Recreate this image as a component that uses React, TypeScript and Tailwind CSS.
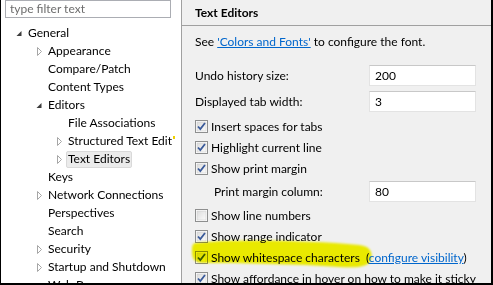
import React from "react";

type TreeNode = {label: string; level: number; arrow?: "open" | "closed"; selected?: boolean};

const tree: TreeNode[] = [
  {label: "General", level: 0, arrow: "open"},
  {label: "Appearance", level: 1, arrow: "closed"},
  {label: "Compare/Patch", level: 1},
  {label: "Content Types", level: 1},
  {label: "Editors", level: 1, arrow: "open"},
  {label: "File Associations", level: 2},
  {label: "Structured Text Edit", level: 2, arrow: "closed"},
  {label: "Text Editors", level: 2, arrow: "closed", selected: true},
  {label: "Keys", level: 1},
  {label: "Network Connections", level: 1, arrow: "closed"},
  {label: "Perspectives", level: 1},
  {label: "Search", level: 1},
  {label: "Security", level: 1, arrow: "closed"},
  {label: "Startup and Shutdown", level: 1, arrow: "closed"},
  {label: "Web Browser", level: 1},
];

const indent = ["pl-[14px]", "pl-[34px]", "pl-[54px]"];

function Arrow({kind}: {kind?: "open" | "closed"}) {
  if (kind === "open") {
    return (
      <svg width="13" height="18" viewBox="0 0 13 18" className="shrink-0">
        <path d="M6.5 7 L6.5 12 L1.5 12 Z" fill="#3c3c3c" />
      </svg>
    );
  }
  if (kind === "closed") {
    return (
      <svg width="13" height="18" viewBox="0 0 13 18" className="shrink-0">
        <path d="M2.5 5.5 L6.5 9.5 L2.5 13.5 Z" fill="none" stroke="#a6a6a6" strokeWidth="1" />
      </svg>
    );
  }
  return <span className="w-[13px] shrink-0" />;
}

function Check({checked}: {checked: boolean}) {
  return (
    <svg width="13" height="13" viewBox="0 0 13 13" className="shrink-0">
      <defs>
        <linearGradient id="cbg" x1="0" y1="0" x2="1" y2="1">
          <stop offset="0" stopColor="#dcdcdc" />
          <stop offset="1" stopColor="#fbfbfb" />
        </linearGradient>
      </defs>
      <rect x="0.5" y="0.5" width="12" height="12" fill="#fff" stroke="#8e8f8f" />
      <rect x="2" y="2" width="9" height="9" fill="url(#cbg)" stroke="#c8c8c8" strokeWidth="0.5" />
      {checked && (
        <path d="M3 6.5 L5.3 9 L10 3" fill="none" stroke="#3a5a9a" strokeWidth="1.8" />
      )}
    </svg>
  );
}

function NumField({label, value, indented}: {label: string; value: string; indented?: boolean}) {
  return (
    <div className="flex items-center h-[21px] shrink-0">
      <span className={indented ? "w-[174px] pl-[19px]" : "w-[174px]"}>{label}</span>
      <div className="w-[107px] h-[21px] bg-white border border-[#e3e3e3] border-t-[#c8c8c8] flex items-center px-[5px]">
        {value}
      </div>
    </div>
  );
}

function CheckRow({label, checked, children}: {label: string; checked: boolean; children?: React.ReactNode}) {
  return (
    <div className="flex items-center h-[21px] gap-[3px] shrink-0">
      <Check checked={checked} />
      <span className="whitespace-nowrap relative z-10">{label}{children}</span>
    </div>
  );
}

export default function App() {
  return (
    <div
      className="relative w-[493px] h-[285px] overflow-hidden flex border-l border-r-2 border-b-2 border-black text-[12px] text-black leading-none"
      style={{fontFamily: "'Segoe UI', Lato, 'Noto Sans', sans-serif"}}
    >
      <div className="w-[180px] shrink-0 bg-white flex flex-col overflow-hidden">
        <div className="shrink-0 ml-[4px] w-[166px] h-[18px] border border-[#abadb3] flex items-center px-[4px] text-[#6d6d6d]">
          type filter text
        </div>
        <div className="shrink-0 mt-[6px] flex flex-col">
          {tree.map((n) => (
            <div key={n.label} className={`shrink-0 flex items-center h-[18px] ${indent[n.level]}`}>
              <Arrow kind={n.arrow} />
              <span
                className={
                  n.selected
                    ? "whitespace-nowrap -ml-[2px] px-[1px] h-[17px] flex items-center bg-[#ebebeb] border border-[#d9d9d9] rounded-[2px]"
                    : "whitespace-nowrap"
                }
              >
                {n.label}
              </span>
            </div>
          ))}
        </div>
      </div>
      <div className="flex-1 bg-[#f0f0f0] border-l border-[#a0a0a0] flex flex-col overflow-hidden">
        <div className="shrink-0 h-[26px] border-b border-[#a0a0a0] flex items-center pl-[13px] font-bold">Text Editors</div>
        <div className="shrink-0 pl-[13px] flex flex-col">
          <div className="shrink-0 h-[20px] mt-[6px] flex items-center">
            See&nbsp;<span className="text-[#0066cc] underline">'Colors and Fonts'</span>&nbsp;to configure the font.
          </div>
          <div className="shrink-0 mt-[13px] flex flex-col gap-[5px]">
            <NumField label="Undo history size:" value="200" />
            <NumField label="Displayed tab width:" value="3" />
          </div>
          <div className="shrink-0 mt-[4px] flex flex-col">
            <CheckRow label="Insert spaces for tabs" checked />
            <CheckRow label="Highlight current line" checked />
            <CheckRow label="Show print margin" checked />
          </div>
          <div className="shrink-0 mt-[2px]">
            <NumField label="Print margin column:" value="80" indented />
          </div>
          <div className="shrink-0 mt-[3px] flex flex-col">
            <CheckRow label="Show line numbers" checked={false} />
            <CheckRow label="Show range indicator" checked />
            <CheckRow label="Show whitespace characters" checked>
              &nbsp;&nbsp;(<span className="text-[#0066cc] underline">configure visibility</span>)
            </CheckRow>
            <CheckRow label="Show affordance in hover on how to make it sticky" checked />
          </div>
        </div>
      </div>
      <svg
        className="absolute left-[188px] top-[237px] pointer-events-none mix-blend-multiply"
        width="190"
        height="34"
        viewBox="0 0 190 34"
      >
        <path
          d="M6 6 C40 2 120 3 170 8 C180 9 184 14 182 22 C180 30 170 31 150 30 C110 27 50 26 14 26 C6 26 3 22 3 15 C3 10 3 7 6 6 Z"
          fill="#f8f800"
          style={{filter: "blur(0.8px)"}}
        />
      </svg>
      <span className="absolute left-[172px] top-[136px] w-[2px] h-[3px] bg-[#f0d000]" />
    </div>
  );
}
